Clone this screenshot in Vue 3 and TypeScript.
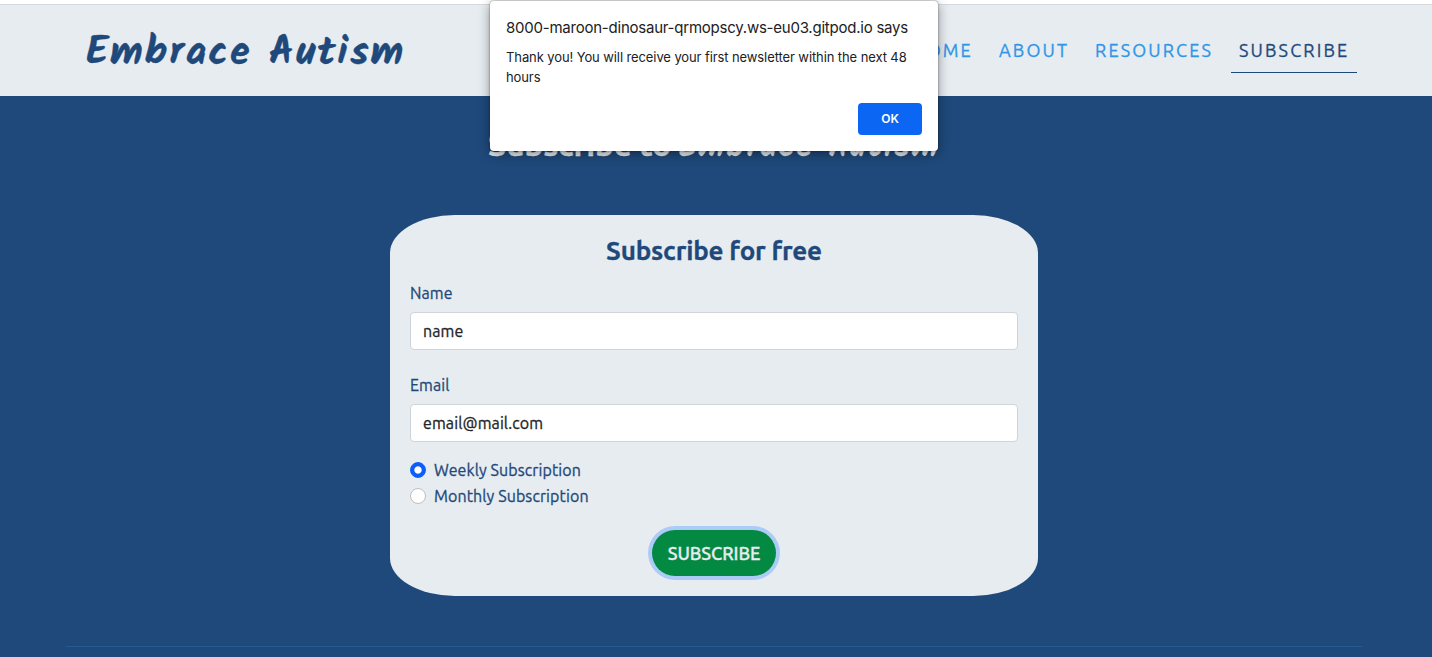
<script setup lang="ts">
import { ref } from 'vue'

interface NavItem {
  label: string
  key: string
}

const navItems: NavItem[] = [
  { label: 'HOME', key: 'home' },
  { label: 'ABOUT', key: 'about' },
  { label: 'RESOURCES', key: 'resources' },
  { label: 'SUBSCRIBE', key: 'subscribe' },
]
const current = ref('subscribe')
const name = ref('name')
const email = ref('email@mail.com')
const plan = ref('weekly')
const alertOpen = ref(true)
</script>

<template>
  <div class="page">
    <header class="header">
      <a class="logo"><span class="logo-text">Embrace Autism</span></a>
      <nav class="nav">
        <a
          v-for="item in navItems"
          :key="item.key"
          class="nav-link"
          :class="[item.key, { active: item.key === current }]"
          ><span>{{ item.label }}</span></a
        >
      </nav>
    </header>

    <main class="main">
      <h1 class="title"><span class="title-lead">Subscribe to</span> <em>Embrace Autism</em></h1>
      <form class="card" @submit.prevent="alertOpen = true">
        <h2 class="card-title"><span>Subscribe for free</span></h2>
        <label class="label name-label" for="name"><span>Name</span></label>
        <input id="name" v-model="name" class="input name-input" type="text" />
        <label class="label email-label" for="email"><span>Email</span></label>
        <input id="email" v-model="email" class="input email-input" type="text" />
        <div class="choices">
          <label class="choice weekly">
            <input v-model="plan" class="radio" type="radio" value="weekly" />
            <span>Weekly Subscription</span>
          </label>
          <label class="choice monthly">
            <input v-model="plan" class="radio" type="radio" value="monthly" />
            <span>Monthly Subscription</span>
          </label>
        </div>
        <button class="submit" type="submit"><span>SUBSCRIBE</span></button>
      </form>
      <hr class="rule" />
    </main>

    <div v-if="alertOpen" class="alert" role="alertdialog">
      <div class="alert-title"><span>8000-maroon-dinosaur-qrmopscy.ws-eu03.gitpod.io says</span></div>
      <p class="alert-text"><span>Thank you! You will receive your first newsletter within the next 48</span><br />hours</p>
      <button class="ok" type="button" @click="alertOpen = false">OK</button>
    </div>
  </div>
</template>

<style>
body {
  margin: 0;
  overflow: hidden;
}
</style>

<style scoped>
.page {
  position: relative;
  display: flex;
  flex-direction: column;
  box-sizing: border-box;
  width: 100%;
  height: 657px;
  padding-top: 4px;
  overflow: hidden;
  background: #fff;
  color: #1f497b;
  font-family: Ubuntu, 'Noto Sans', sans-serif;
  font-size: 16px;
  letter-spacing: 0.1px;
  -webkit-text-stroke-width: 0.3px;
}

.header {
  display: flex;
  flex: none;
  justify-content: space-between;
  box-sizing: border-box;
  height: 92px;
  padding: 0 75px 0 86px;
  border-top: 1px solid #d5d8dc;
  background: #e7ecf0;
}

.logo {
  padding-top: 24px;
  font: 700 40px/48px Kalam, Lato, sans-serif;
  letter-spacing: 2px;
  white-space: nowrap;
}

.nav {
  display: flex;
  gap: 10px;
  height: 68px;
}

.nav-link {
  box-sizing: border-box;
  padding: 32px 0 0 8px;
  color: #2f95e7;
  font-size: 18px;
  line-height: 26px;
  letter-spacing: 2.15px;
  white-space: nowrap;
}

.home {
  width: 77px;
}

.about {
  width: 86px;
}

.resources {
  width: 134px;
}

.subscribe {
  width: 126px;
}

.active {
  border-bottom: 1px solid #1f497b;
  color: #1f497b;
}

.main {
  display: flex;
  flex: 1;
  flex-direction: column;
  align-items: center;
  background: #1f497b;
}

.title {
  width: 456px;
  height: 48px;
  margin: 24px 0 0;
  color: #e7ecf0;
  font-size: 32px;
  font-weight: 700;
  line-height: 48px;
  letter-spacing: 0;
  white-space: nowrap;
}

.title-lead {
  letter-spacing: -0.3px;
}

.title em {
  font-family: Kalam, Lato, sans-serif;
  font-style: normal;
  font-weight: 700;
  letter-spacing: 2px;
}

.card {
  display: flex;
  flex-direction: column;
  box-sizing: border-box;
  width: 648px;
  height: 381px;
  margin: 47px 4px 0 0;
  padding: 16px 20px 20px;
  border-radius: 10%;
  background: #e7ecf0;
}

.card-title {
  margin: 0;
  font-size: 26px;
  font-weight: 600;
  line-height: 40px;
  letter-spacing: -0.2px;
  text-align: center;
}

.label {
  height: 24px;
  line-height: 24px;
}

.name-label {
  margin-top: 10px;
}

.email-label {
  margin-top: 23px;
}

.input {
  box-sizing: border-box;
  width: 100%;
  height: 38px;
  margin: 7px 0 0;
  padding: 0 12px;
  border: 1px solid #ced4da;
  border-radius: 4px;
  outline: none;
  background: #fff;
  color: #212529;
  font: inherit;
  letter-spacing: inherit;
}

.choices {
  display: flex;
  flex-direction: column;
  gap: 2px;
  margin-top: 16px;
}

.choice {
  display: flex;
  gap: 8px;
  align-items: center;
  height: 24px;
}

.radio {
  box-sizing: border-box;
  width: 16px;
  height: 16px;
  margin: 0;
  border: 1px solid #bfbfbf;
  border-radius: 50%;
  appearance: none;
  background: #fff;
}

.radio:checked {
  border-color: #0d5dfd;
  background: radial-gradient(circle, #fff 3.2px, #0d5dfd 4.1px);
}

.submit {
  align-self: center;
  width: 124px;
  height: 46px;
  margin-top: 22px;
  padding: 0;
  border: 0;
  border-radius: 23px;
  background: #048943;
  box-shadow: 0 0 0 4px #accbf7;
  color: #e7ecf0;
  font-family: inherit;
  font-size: 18px;
  font-weight: 500;
  letter-spacing: -0.1px;
}

.rule {
  width: 1296px;
  height: 1px;
  margin: 50px 4px 0 0;
  border: 0;
  background: #235c94;
}

.alert {
  position: absolute;
  top: 1px;
  left: 490px;
  display: flex;
  flex-direction: column;
  box-sizing: border-box;
  width: 448px;
  height: 150px;
  padding: 16px;
  border-radius: 4px;
  background: #fff;
  box-shadow: 0 0 2px rgba(0, 0, 0, 0.5), 0 3px 12px rgba(0, 0, 0, 0.4);
  color: #202124;
  font-family: Inter, sans-serif;
  white-space: nowrap;
  -webkit-text-stroke-width: 0;
}

.alert-title {
  font-size: 15px;
  line-height: 22px;
  letter-spacing: -0.23px;
}

.alert-text {
  margin: 8px 0 0;
  font-size: 13px;
  line-height: 20px;
  letter-spacing: -0.1px;
}

.ok {
  align-self: flex-end;
  width: 64px;
  height: 32px;
  margin-top: 16px;
  padding: 0 0 2px;
  border: 0;
  border-radius: 4px;
  background: #0b66f3;
  color: #fff;
  font: 600 12px Inter, sans-serif;
}
</style>
